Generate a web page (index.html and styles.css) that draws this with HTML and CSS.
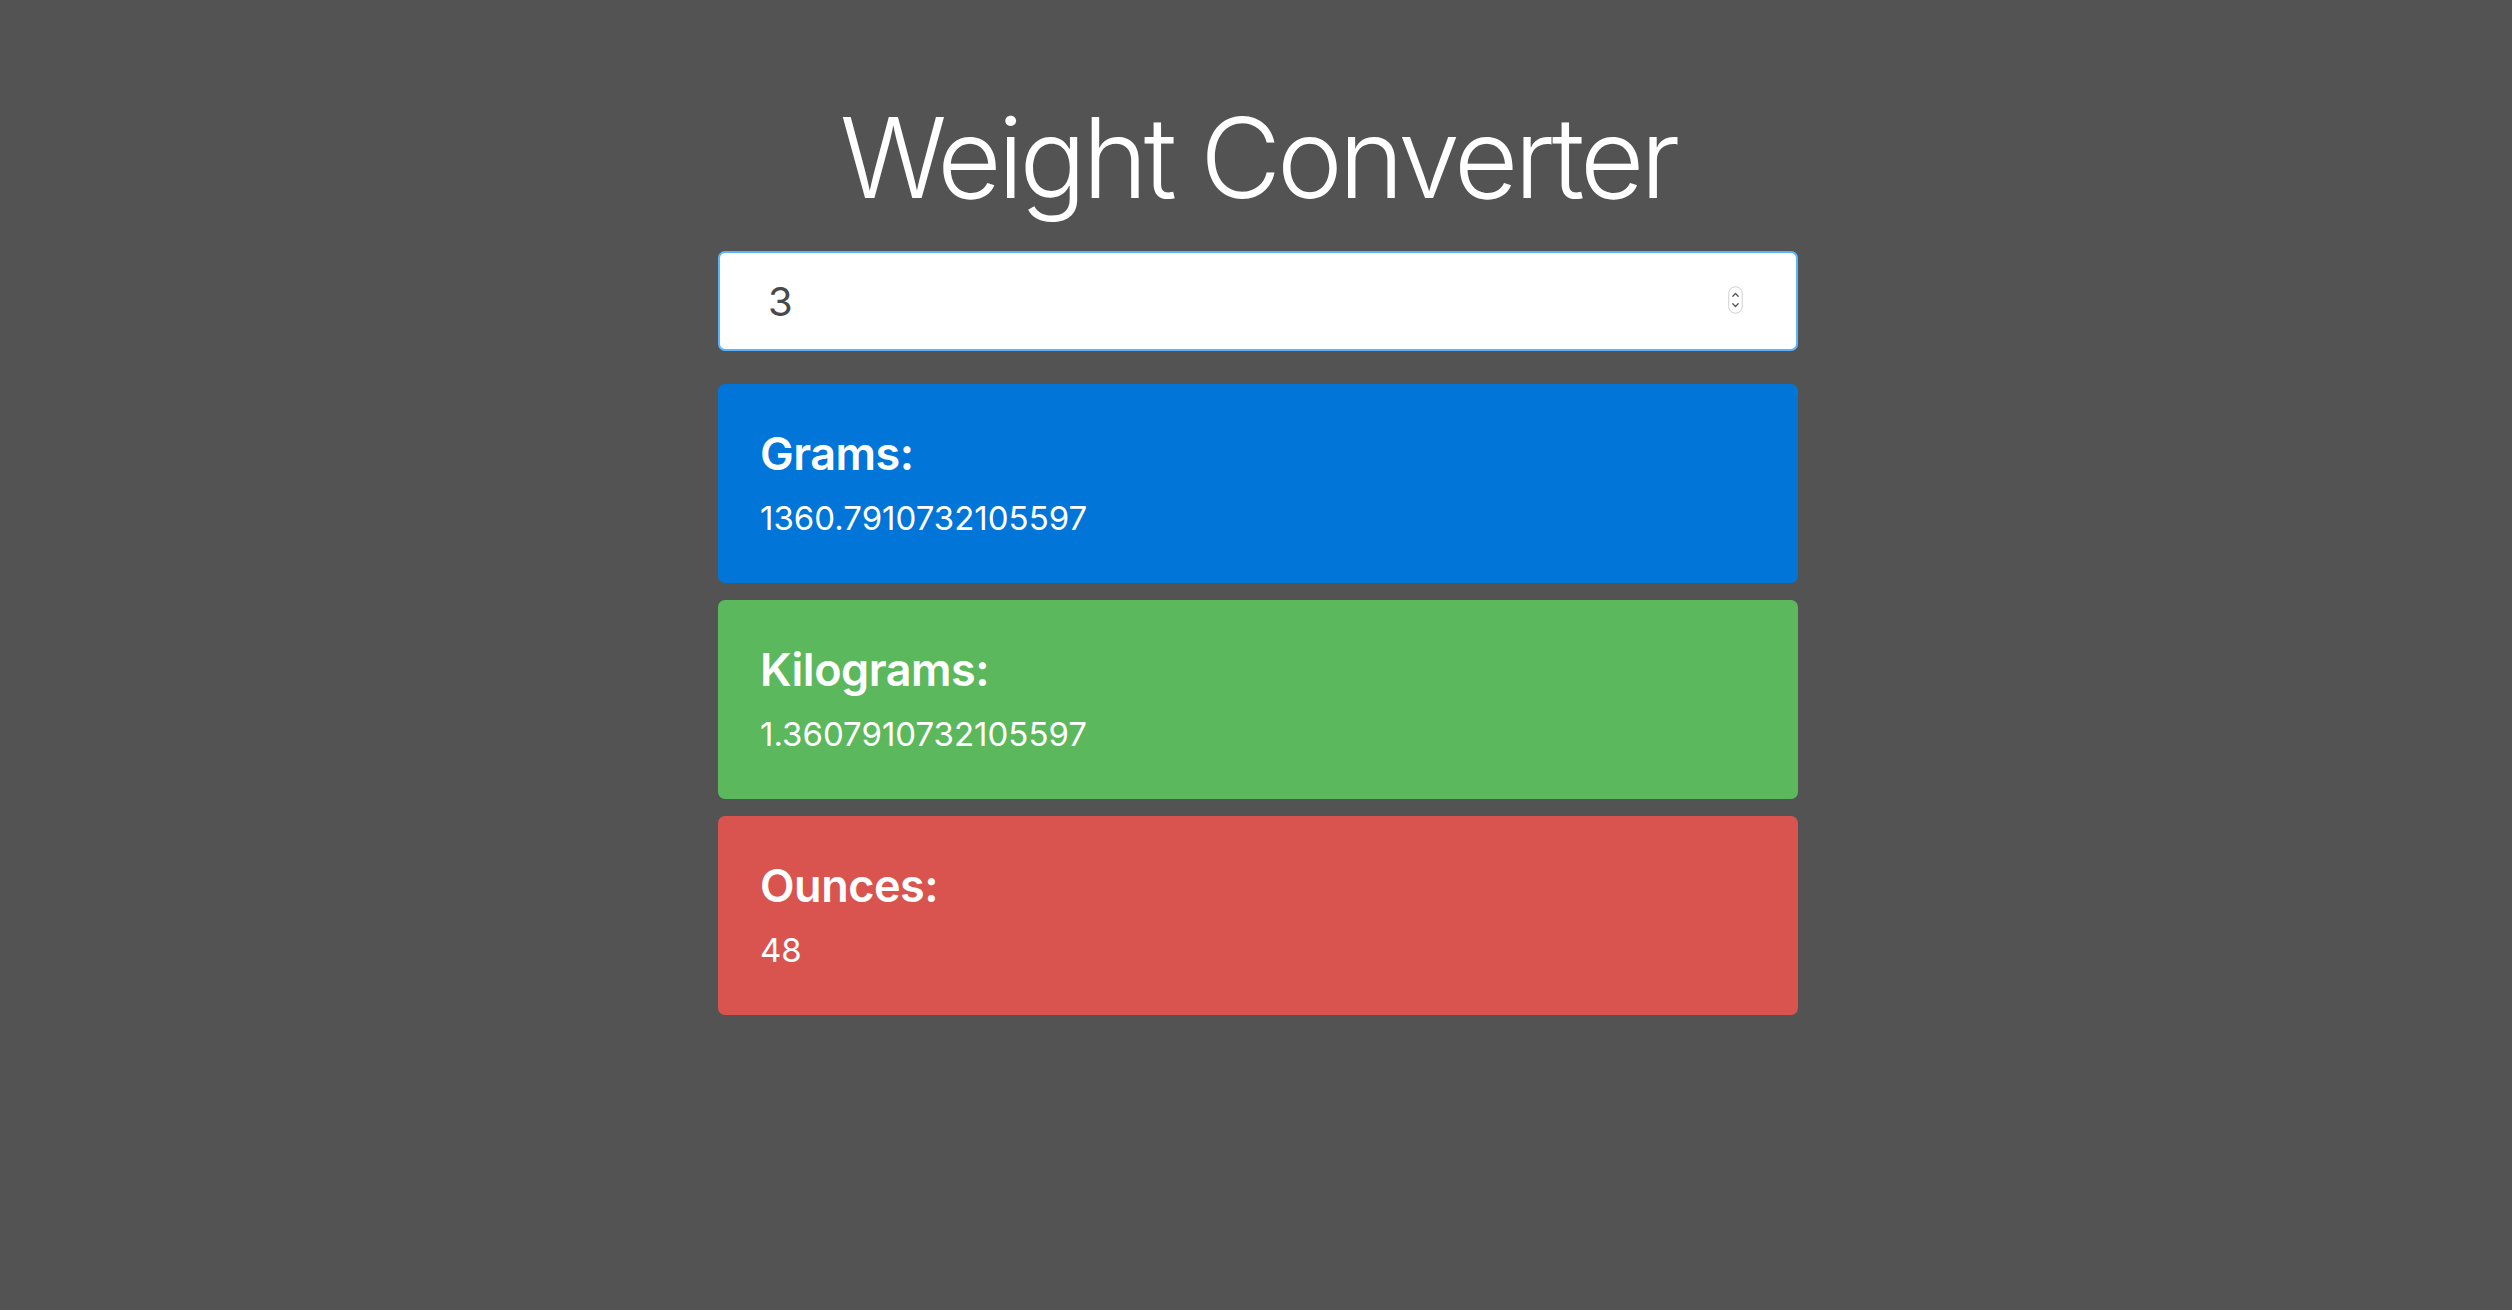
FILE: index.html
```html
<!DOCTYPE html>
<html lang="en">
<head>
<meta charset="utf-8">
<title>Weight Converter</title>
<link rel="stylesheet" href="styles.css">
</head>
<body>
<main class="container">
  <h1 class="title">Weight Converter</h1>
  <div class="field">
    <input class="field-input" type="text" value="3" aria-label="Pounds">
    <svg class="spinner" width="15" height="28" viewBox="0 0 15 28" aria-hidden="true">
      <rect x="0.75" y="0.75" width="13.5" height="26.5" rx="6.75" fill="#fff" stroke="#cfcfcf" stroke-width="1"/>
      <path d="M4.8 10.2 L7.5 7.5 L10.2 10.2" fill="none" stroke="#555" stroke-width="1.3" stroke-linecap="round" stroke-linejoin="round"/>
      <path d="M4.8 17.8 L7.5 20.5 L10.2 17.8" fill="none" stroke="#555" stroke-width="1.3" stroke-linecap="round" stroke-linejoin="round"/>
    </svg>
  </div>
  <section class="card card-blue">
    <h4 class="card-title">Grams:</h4>
    <p class="card-value">1360.7910732105597</p>
  </section>
  <section class="card card-green">
    <h4 class="card-title">Kilograms:</h4>
    <p class="card-value">1.3607910732105597</p>
  </section>
  <section class="card card-red">
    <h4 class="card-title">Ounces:</h4>
    <p class="card-value">48</p>
  </section>
</main>
</body>
</html>
```
FILE: styles.css
```css
html, body {
  margin: 0;
  padding: 0;
}
body {
  background: #535353;
  min-height: 1310px;
  font-family: Inter, "Noto Sans", "Liberation Sans", sans-serif;
  color: #fff;
}
.container {
  width: 1080px;
  margin: 0 0 0 calc(50% - 538px);
  padding-top: 91px;
  display: flex;
  flex-direction: column;
}
.title {
  margin: 0 0 27px;
  font-size: 111px;
  line-height: 133px;
  font-weight: 300;
  text-align: center;
  letter-spacing: -4px;
  color: #fff;
}
.field {
  position: relative;
  margin-bottom: 33px;
}
.field-input {
  display: block;
  box-sizing: border-box;
  width: 100%;
  height: 100px;
  padding: 0 48px;
  border: 2px solid #5cb3fd;
  border-radius: 7px;
  background: #fff;
  font-family: Inter, "Noto Sans", "Liberation Sans", sans-serif;
  font-size: 40px;
  color: #464a4c;
  outline: none;
}
.spinner {
  position: absolute;
  right: 55px;
  top: 35px;
}
.card {
  border-radius: 7px;
  padding: 43px 42px 40px;
  margin-bottom: 17px;
}
.card-blue { background: #0275d8; }
.card-green { background: #5cb85c; }
.card-red { background: #d9534f; }
.card-title {
  margin: 0 0 12px;
  font-size: 45px;
  line-height: 54px;
  font-weight: 600;
  letter-spacing: -0.5px;
}
.card-value {
  margin: 0;
  font-size: 33px;
  line-height: 50px;
  font-weight: 400;
}
```
